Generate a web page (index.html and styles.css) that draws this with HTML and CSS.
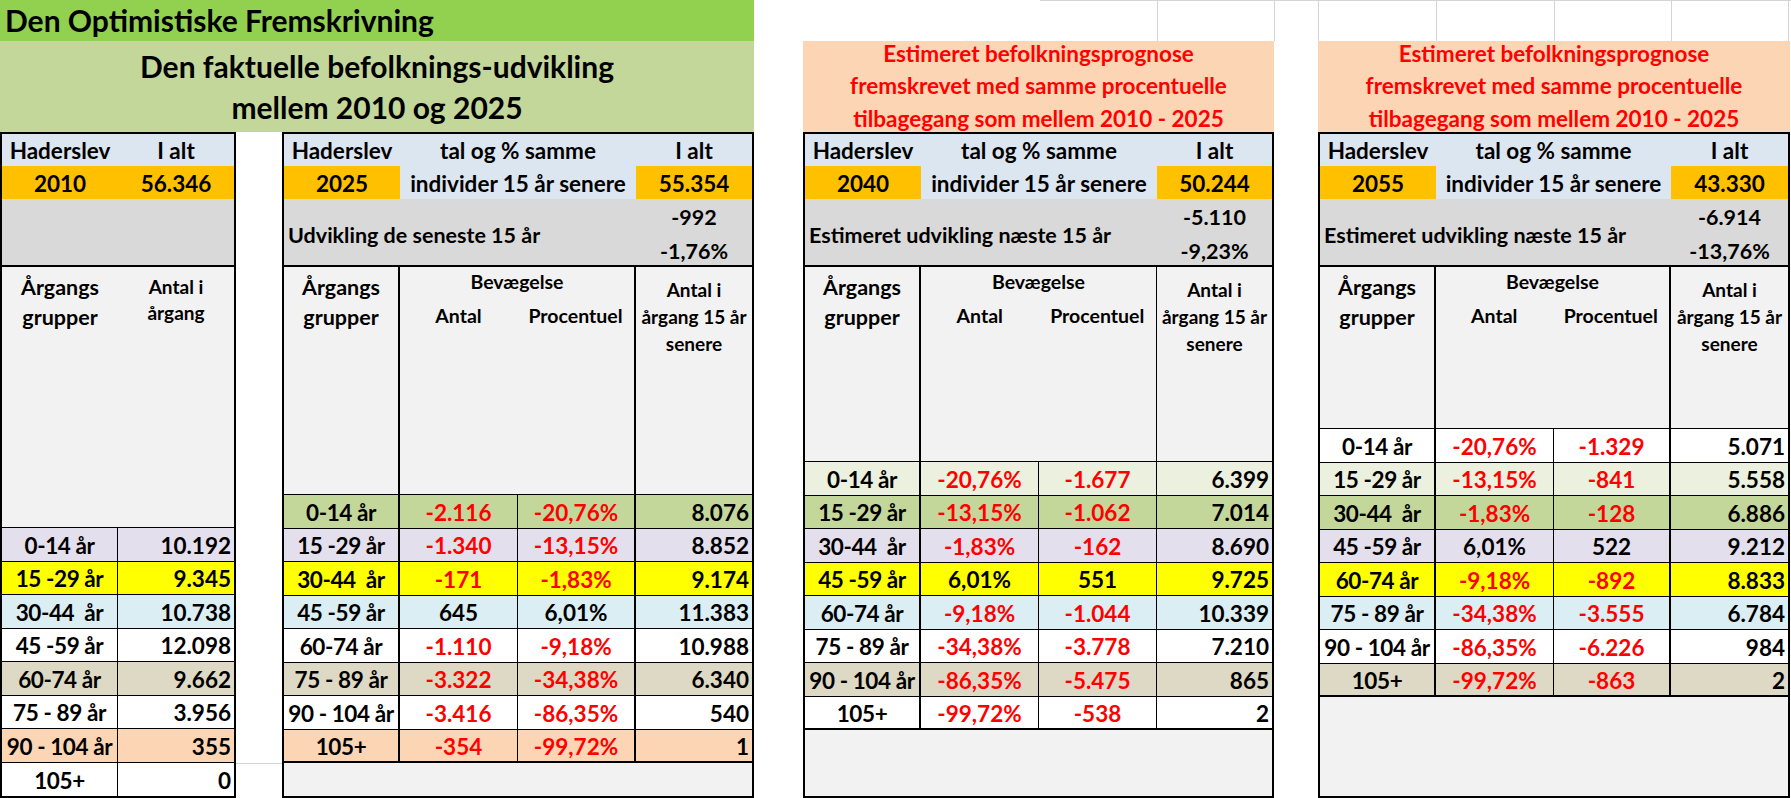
FILE: index.html
```html
<!DOCTYPE html>
<html lang="da">
<head>
<meta charset="utf-8">
<title>Den Optimistiske Fremskrivning</title>
<link rel="stylesheet" href="styles.css">
</head>
<body>
<div class="sheet">
  <section class="col-a">
    <div class="title">Den Optimistiske Fremskrivning</div>
    <div class="subtitle"><span>Den faktuelle befolknings-udvikling</span><span>mellem 2010 og 2025</span></div>
    <div class="pair">
      <div class="panel p1">
        <div class="hr ha"><span class="c0">Haderslev</span><span class="c0">I alt</span></div>
        <div class="hr hb"><span class="c0 org">2010</span><span class="c0 org">56.346</span></div>
        <div class="gray"></div>
        <div class="colhead">
          <div class="ch big">Årgangs<br>grupper</div>
          <div class="ch small">Antal i<br>årgang</div>
        </div>
        <div class="r lav"><span>0-14 år</span><span>10.192</span></div>
        <div class="r yel"><span>15 -29 år</span><span>9.345</span></div>
        <div class="r blu"><span>30-44&nbsp; år</span><span>10.738</span></div>
        <div class="r wht"><span>45 -59 år</span><span>12.098</span></div>
        <div class="r tan"><span>60-74 år</span><span>9.662</span></div>
        <div class="r wht"><span>75 - 89 år</span><span>3.956</span></div>
        <div class="r pch"><span>90 - 104 år</span><span>355</span></div>
        <div class="r wht last"><span>105+</span><span>0</span></div>
      </div>
      <div class="panel p2">
        <div class="hr ha"><span class="c0">Haderslev</span><span class="c0 span2">tal og % samme</span><span class="c0">I alt</span></div>
        <div class="hr hb"><span class="c0 org">2025</span><span class="c0 span2">individer 15 år senere</span><span class="c0 org">55.354</span></div>
        <div class="gray"><span class="glabel">Udvikling de seneste 15 år</span><span class="gval">-992<br>-1,76%</span></div>
        <div class="colhead">
          <div class="ch big">Årgangs<br>grupper</div>
          <div class="ch bev"><span class="bev-t">Bevægelse</span><span class="bev-s"><span>Antal</span><span>Procentuel</span></span></div>
          <div class="ch small">Antal i<br>årgang 15 år<br>senere</div>
        </div>
        <div class="r grn"><span>0-14 år</span><span class="neg">-2.116</span><span class="neg">-20,76%</span><span>8.076</span></div>
        <div class="r lav"><span>15 -29 år</span><span class="neg">-1.340</span><span class="neg">-13,15%</span><span>8.852</span></div>
        <div class="r yel"><span>30-44&nbsp; år</span><span class="neg">-171</span><span class="neg">-1,83%</span><span>9.174</span></div>
        <div class="r blu"><span>45 -59 år</span><span>645</span><span>6,01%</span><span>11.383</span></div>
        <div class="r wht"><span>60-74 år</span><span class="neg">-1.110</span><span class="neg">-9,18%</span><span>10.988</span></div>
        <div class="r tan"><span>75 - 89 år</span><span class="neg">-3.322</span><span class="neg">-34,38%</span><span>6.340</span></div>
        <div class="r wht"><span>90 - 104 år</span><span class="neg">-3.416</span><span class="neg">-86,35%</span><span>540</span></div>
        <div class="r pch last"><span>105+</span><span class="neg">-354</span><span class="neg">-99,72%</span><span>1</span></div>
        <div class="empty"></div>
      </div>
    </div>
  </section>

  <section class="col-p col-c">
    <div class="topstrip"></div>
    <div class="prognose"><span>Estimeret befolkningsprognose</span><span>fremskrevet med samme procentuelle</span><span>tilbagegang som mellem 2010 - 2025</span></div>
    <div class="panel p3">
      <div class="hr ha"><span class="c0">Haderslev</span><span class="c0 span2">tal og % samme</span><span class="c0">I alt</span></div>
      <div class="hr hb"><span class="c0 org">2040</span><span class="c0 span2">individer 15 år senere</span><span class="c0 org">50.244</span></div>
      <div class="gray"><span class="glabel">Estimeret udvikling næste 15 år</span><span class="gval">-5.110<br>-9,23%</span></div>
      <div class="colhead">
        <div class="ch big">Årgangs<br>grupper</div>
        <div class="ch bev"><span class="bev-t">Bevægelse</span><span class="bev-s"><span>Antal</span><span>Procentuel</span></span></div>
        <div class="ch small">Antal i<br>årgang 15 år<br>senere</div>
      </div>
      <div class="r lgr"><span>0-14 år</span><span class="neg">-20,76%</span><span class="neg">-1.677</span><span>6.399</span></div>
      <div class="r grn"><span>15 -29 år</span><span class="neg">-13,15%</span><span class="neg">-1.062</span><span>7.014</span></div>
      <div class="r lav"><span>30-44&nbsp; år</span><span class="neg">-1,83%</span><span class="neg">-162</span><span>8.690</span></div>
      <div class="r yel"><span>45 -59 år</span><span>6,01%</span><span>551</span><span>9.725</span></div>
      <div class="r blu"><span>60-74 år</span><span class="neg">-9,18%</span><span class="neg">-1.044</span><span>10.339</span></div>
      <div class="r wht"><span>75 - 89 år</span><span class="neg">-34,38%</span><span class="neg">-3.778</span><span>7.210</span></div>
      <div class="r tan"><span>90 - 104 år</span><span class="neg">-86,35%</span><span class="neg">-5.475</span><span>865</span></div>
      <div class="r wht last"><span>105+</span><span class="neg">-99,72%</span><span class="neg">-538</span><span>2</span></div>
      <div class="empty"></div>
    </div>
  </section>

  <section class="col-p col-d">
    <div class="topstrip"></div>
    <div class="prognose"><span>Estimeret befolkningsprognose</span><span>fremskrevet med samme procentuelle</span><span>tilbagegang som mellem 2010 - 2025</span></div>
    <div class="panel p4">
      <div class="hr ha"><span class="c0">Haderslev</span><span class="c0 span2">tal og % samme</span><span class="c0">I alt</span></div>
      <div class="hr hb"><span class="c0 org">2055</span><span class="c0 span2">individer 15 år senere</span><span class="c0 org">43.330</span></div>
      <div class="gray"><span class="glabel">Estimeret udvikling næste 15 år</span><span class="gval">-6.914<br>-13,76%</span></div>
      <div class="colhead">
        <div class="ch big">Årgangs<br>grupper</div>
        <div class="ch bev"><span class="bev-t">Bevægelse</span><span class="bev-s"><span>Antal</span><span>Procentuel</span></span></div>
        <div class="ch small">Antal i<br>årgang 15 år<br>senere</div>
      </div>
      <div class="r wht"><span>0-14 år</span><span class="neg">-20,76%</span><span class="neg">-1.329</span><span>5.071</span></div>
      <div class="r lgr"><span>15 -29 år</span><span class="neg">-13,15%</span><span class="neg">-841</span><span>5.558</span></div>
      <div class="r grn"><span>30-44&nbsp; år</span><span class="neg">-1,83%</span><span class="neg">-128</span><span>6.886</span></div>
      <div class="r lav"><span>45 -59 år</span><span>6,01%</span><span>522</span><span>9.212</span></div>
      <div class="r yel"><span>60-74 år</span><span class="neg">-9,18%</span><span class="neg">-892</span><span>8.833</span></div>
      <div class="r blu"><span>75 - 89 år</span><span class="neg">-34,38%</span><span class="neg">-3.555</span><span>6.784</span></div>
      <div class="r wht"><span>90 - 104 år</span><span class="neg">-86,35%</span><span class="neg">-6.226</span><span>984</span></div>
      <div class="r tan last"><span>105+</span><span class="neg">-99,72%</span><span class="neg">-863</span><span>2</span></div>
      <div class="empty"></div>
    </div>
  </section>
</div>
</body>
</html>
```

FILE: styles.css
```css
* { box-sizing: border-box; margin: 0; padding: 0; }
html, body { background: #fff; }
body {
  font-family: Lato, "Noto Sans", sans-serif;
  font-weight: 700;
  color: #000;
  width: 1791px;
  height: 798px;
  overflow: hidden;
}

.sheet {
  display: flex;
  align-items: flex-start;
  height: 798px;
  background:
    linear-gradient(#d4d4d4, #d4d4d4) 1040px 0 / 751px 1px no-repeat,
    linear-gradient(#d4d4d4, #d4d4d4) 1157px 0 / 1px 41px no-repeat,
    linear-gradient(#d4d4d4, #d4d4d4) 1274px 0 / 1px 41px no-repeat,
    linear-gradient(#d4d4d4, #d4d4d4) 1318px 0 / 1px 41px no-repeat,
    linear-gradient(#d4d4d4, #d4d4d4) 1436px 0 / 1px 41px no-repeat,
    linear-gradient(#d4d4d4, #d4d4d4) 1554px 0 / 1px 41px no-repeat,
    linear-gradient(#d4d4d4, #d4d4d4) 1671px 0 / 1px 41px no-repeat,
    linear-gradient(#d4d4d4, #d4d4d4) 1788px 0 / 1px 41px no-repeat,
    linear-gradient(#d4d4d4, #d4d4d4) 236px 763px / 46px 1px no-repeat;
}

/* Left block */
.col-a { width: 754px; display: flex; flex-direction: column; }
.title {
  height: 41px;
  background: #92D050;
  font-size: 30px;
  line-height: 41px;
  padding-left: 5px;
  white-space: nowrap;
}
.subtitle {
  height: 91px;
  background: #C4D79B;
  font-size: 30px;
  line-height: 41px;
  display: flex;
  flex-direction: column;
  align-items: center;
  justify-content: center;
  padding-top: 1px;
  white-space: nowrap;
}
.pair { display: flex; gap: 46px; }

/* Prognosis columns */
.col-p { width: 471px; display: flex; flex-direction: column; }
.col-c { margin-left: 49px; }
.col-d { margin-left: 44px; width: 472px; }
.topstrip { height: 41px; }
.prognose {
  height: 91px;
  background: #FCD5B4;
  color: #FF0000;
  font-size: 22.5px;
  line-height: 32.5px;
  display: flex;
  flex-direction: column;
  align-items: center;
  justify-content: center;
  white-space: nowrap;
}

/* Panels */
.panel {
  height: 666px;
  border: 2px solid #000;
  background: #F2F2F2;
  display: flex;
  flex-direction: column;
}
.p1 { width: 236px; --cols: 116px 116px; }
.p2 { width: 472px; --cols: 116px 118px 118px 116px; }
.p3 { width: 471px; --cols: 116px 118px 118px 115px; }
.p4 { width: 472px; --cols: 116px 118px 117px 117px; }

.hr, .r, .gray, .colhead {
  display: grid;
  grid-template-columns: var(--cols);
  flex: none;
}

.hr { background: #DCE6F1; font-size: 22.5px; }
.ha { height: 32px; }
.hb { height: 33px; }
.c0 {
  display: flex;
  align-items: center;
  justify-content: center;
  white-space: nowrap;
  padding-top: 1px;
}
.span2 { grid-column: span 2; }
.org { background: #FFC000; }

.gray {
  height: 68px;
  background: #D9D9D9;
  border-bottom: 2px solid #000;
  font-size: 21.5px;
}
.glabel {
  grid-column: span 3;
  display: flex;
  align-items: center;
  padding-left: 4px;
  padding-top: 3px;
  white-space: nowrap;
}
.gval {
  display: flex;
  align-items: center;
  justify-content: center;
  text-align: center;
  line-height: 34px;
  padding-top: 1px;
  white-space: nowrap;
}

.colhead { background: #F2F2F2; border-bottom: 1px solid #000; }
.p1 .colhead { height: 261px; }
.p2 .colhead { height: 228px; }
.p3 .colhead { height: 195px; }
.p4 .colhead { height: 162px; }

.ch { text-align: center; border-right: 2px solid #000; white-space: nowrap; }
.ch:last-child { border-right: none; }
.p1 .ch { border-right: none; }
.p3 .ch.bev { border-right-width: 1px; }
.ch.big { font-size: 21.5px; line-height: 30px; padding-top: 5px; }
.ch.small { font-size: 19px; line-height: 27px; padding-top: 9px; }
.p1 .ch.small { line-height: 26px; padding-top: 7px; }
.bev { grid-column: span 2; display: flex; flex-direction: column; font-size: 19.5px; }
.bev-t { line-height: 30px; }
.bev-s { display: grid; grid-template-columns: 1fr 1fr; line-height: 38px; }

/* Data rows */
.r {
  height: 33.5px;
  border-bottom: 1px solid #000;
  font-size: 22.5px;
}
.r > span {
  display: flex;
  align-items: center;
  justify-content: center;
  border-right: 1px solid #000;
  white-space: nowrap;
  padding-top: 2px;
}
.r > span:first-child { letter-spacing: -0.4px; }
.r > span:last-child {
  border-right: none;
  justify-content: flex-end;
  padding-right: 3px;
}
.p2 .r > span:first-child,
.p3 .r > span:first-child,
.p4 .r > span:first-child,
.p2 .r > span:nth-child(3),
.p4 .r > span:nth-child(3) { border-right-width: 2px; }
.r.last { border-bottom-width: 2px; }
.p1 .r.last { border-bottom: none; }

.neg { color: #FF0000; }
.empty { flex: 1; }

.wht { background: #FFFFFF; }
.lav { background: #E4DFEC; }
.yel { background: #FFFF00; }
.blu { background: #DAEEF3; }
.tan { background: #DDD9C4; }
.pch { background: #FCD5B4; }
.grn { background: #C4D79B; }
.lgr { background: #EBF1DE; }
```
